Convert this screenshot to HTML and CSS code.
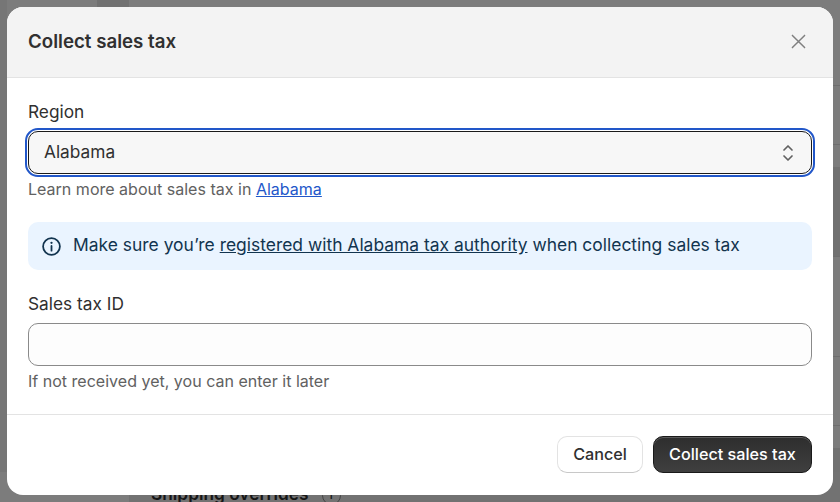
FILE: index.html
```html
<!DOCTYPE html>
<html lang="en">
<head>
<meta charset="utf-8">
<title>Collect sales tax</title>
<link rel="stylesheet" href="styles.css">
</head>
<body>
<div class="backdrop">
  <div class="bg-top-tab"></div>
  <div class="bg-left"></div>
  <div class="bg-left-low"></div>
  <div class="bg-bottom"></div>
  <div class="bg-right-a"></div>
  <div class="bg-right-b"></div>
  <div class="bg-right-c"></div>
  <div class="bg-right-d"></div>
  <div class="page-title">Shipping overrides <span class="page-info">i</span></div>
</div>
<div class="modal">
  <header class="modal-header">
    <h2 class="modal-title">Collect sales tax</h2>
    <svg class="close-icon" viewBox="0 0 16 16" aria-hidden="true"><path d="M1.5 1.5l13 13M14.5 1.5l-13 13"/></svg>
  </header>
  <div class="modal-body">
    <div class="field">
      <label class="label">Region</label>
      <div class="select">
        <span class="select-value">Alabama</span>
        <svg class="chevrons" viewBox="0 0 12 20" aria-hidden="true"><path d="M2 7l4-4 4 4M2 13l4 4 4-4"/></svg>
      </div>
      <p class="help">Learn more about sales tax in <a class="link" href="#">Alabama</a></p>
    </div>
    <div class="banner">
      <svg class="info-icon" viewBox="0 0 20 20" aria-hidden="true"><circle cx="10" cy="10" r="8"/><path d="M10 9.5v4.5"/><circle class="dot" cx="10" cy="6.5" r="1.1"/></svg>
      <span class="banner-text">Make sure you’re <a class="banner-link" href="#">registered with Alabama tax authority</a> when collecting sales tax</span>
    </div>
    <div class="field">
      <label class="label">Sales tax ID</label>
      <div class="input"></div>
      <p class="help">If not received yet, you can enter it later</p>
    </div>
  </div>
  <footer class="modal-footer">
    <button class="btn btn-plain">Cancel</button>
    <button class="btn btn-primary">Collect sales tax</button>
  </footer>
</div>
</body>
</html>
```
FILE: styles.css
```css
* { box-sizing: border-box; }
html, body { margin: 0; height: 100%; }
body {
  width: 840px;
  height: 502px;
  overflow: hidden;
  position: relative;
  font-family: Inter, "Liberation Sans", sans-serif;
  color: #303030;
  background: #7c7c7c;
}
.backdrop { position: absolute; inset: 0; }
.backdrop div { position: absolute; }
.bg-top-tab { left: 97px; top: 0; width: 32px; height: 8px; background: #717171; }
.bg-left { left: 0; top: 0; width: 7px; height: 472px; background: #767676; }
.bg-left-low { left: 0; top: 472px; width: 97px; height: 30px; background: #7c7c7c; }
.bg-bottom { left: 129px; top: 472px; width: 711px; height: 30px; background: #727272; }
.bg-right-a { left: 833px; top: 85px; width: 7px; height: 60px; border-top: 1px solid #6e6e6e; border-bottom: 1px solid #6e6e6e; }
.bg-right-b { left: 833px; top: 167px; width: 7px; height: 90px; background: #717171; border-bottom: 1px solid #6e6e6e; }
.bg-right-c { left: 833px; top: 356px; width: 7px; height: 70px; border-top: 1px solid #6e6e6e; border-bottom: 1px solid #6e6e6e; }
.bg-right-d { left: 833px; top: 448px; width: 7px; height: 24px; background: #717171; }
.backdrop .page-title {
  left: 151px; top: 483px;
  font-size: 17.3px; line-height: 22px; font-weight: 600; color: #161616; white-space: nowrap;
}
.page-info {
  display: inline-block; width: 19px; height: 19px; margin-left: 9px;
  border: 1.5px solid #444; border-radius: 50%;
  font-size: 12px; line-height: 16px; text-align: center; font-weight: 500;
  vertical-align: middle;
}
.modal {
  position: absolute; left: 7px; top: 7px;
  width: 826px; height: 488px;
  background: #fff; border-radius: 16px; overflow: hidden;
  display: flex; flex-direction: column;
}
.modal-header {
  height: 71px; flex: none;
  background: #f3f3f3; border-bottom: 1px solid #e3e3e3;
  display: flex; align-items: center; justify-content: space-between;
  padding: 0 27px 1px 21px;
}
.modal-title { margin: 0; font-size: 18.7px; line-height: 24px; font-weight: 620; color: #303030; }
.close-icon { width: 15px; height: 15px; fill: none; stroke: #7f7f7f; stroke-width: 1.6; stroke-linecap: round; }
.modal-body { flex: 1; padding: 22px 21px 0; display: flex; flex-direction: column; }
.field { display: flex; flex-direction: column; }
.label { font-size: 17.3px; line-height: 24px; margin-bottom: 7px; color: #303030; }
.select {
  height: 43px;
  background: #f7f7f7; border: 1px solid #1a1a1a; border-radius: 10px;
  outline: 2px solid #2257c9; outline-offset: 1px;
  display: flex; align-items: center; justify-content: space-between;
  padding: 0 17px 0 15px;
  font-size: 17.3px; color: #303030;
}
.select-value { padding-bottom: 2px; }
.chevrons { width: 12px; height: 20px; fill: none; stroke: #616161; stroke-width: 1.7; stroke-linecap: round; stroke-linejoin: round; }
.help { margin: 5px 0 0; font-size: 16.05px; line-height: 20px; color: #616161; }
.link { color: #2257c9; text-decoration: underline; }
.banner {
  margin-top: 23px; height: 48px; flex: none;
  background: #eaf4ff; border-radius: 10px;
  display: flex; align-items: center; gap: 11px;
  padding: 0 12px 0 13px;
  font-size: 17.45px; color: #12344f;
}
.banner-text { padding-bottom: 3px; }
.banner + .field { margin-top: 22px; }
.banner-link { color: #12344f; text-decoration: underline; }
.info-icon { width: 21px; height: 21px; flex: none; fill: none; stroke: #12344f; stroke-width: 1.7; stroke-linecap: round; }
.info-icon .dot { fill: #12344f; stroke: none; }
.input {
  height: 43px; background: #fdfdfd;
  border: 1px solid #8a8a8a; border-radius: 10px;
}
.modal-footer {
  height: 81px; flex: none;
  border-top: 1px solid #e3e3e3;
  display: flex; align-items: center; justify-content: flex-end; gap: 10px;
  padding: 0 21px 2px 0;
}
.btn {
  height: 37px; border-radius: 10px;
  font-family: inherit; font-size: 16.2px; font-weight: 550;
  padding: 0; cursor: pointer;
}
.btn-plain {
  width: 86px; background: #fff; color: #303030;
  border: 1px solid #e3e3e3; border-bottom-color: #c8c8c8;
}
.btn-primary {
  width: 159px; color: #fff;
  background: linear-gradient(#2e2e2e, #3f3f3f);
  border: 1px solid #1a1a1a;
  box-shadow: inset 0 1px 0 #5a5a5a;
}
```
